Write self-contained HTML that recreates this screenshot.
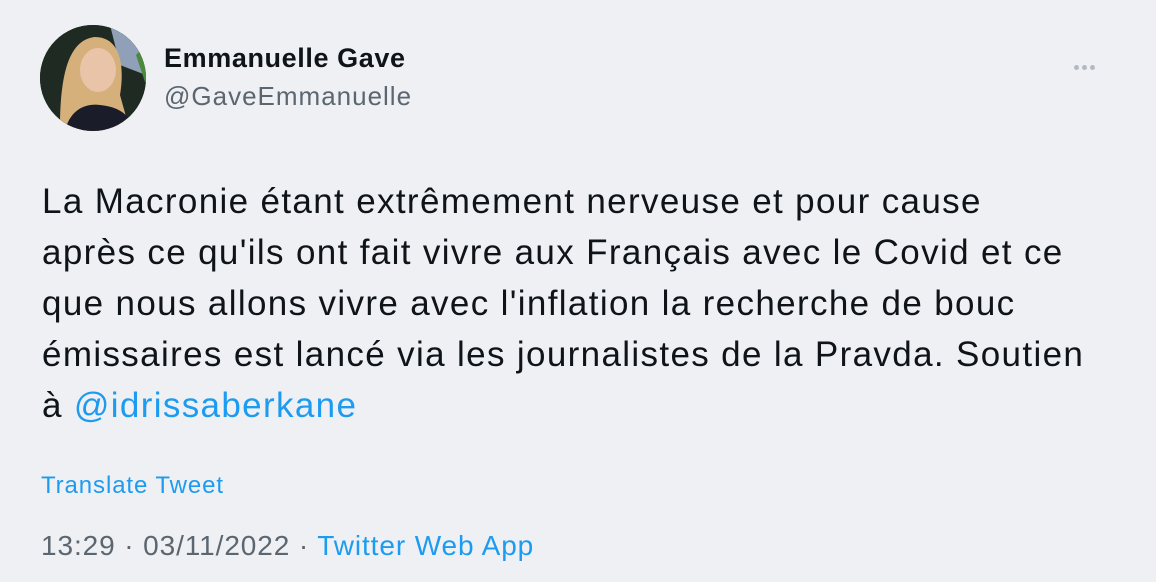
<!DOCTYPE html>
<html><head><meta charset="utf-8"><style>
html,body{margin:0;padding:0}
body{width:1156px;height:582px;background:#eef0f3;font-family:"Liberation Sans",Arial,sans-serif;position:relative;overflow:hidden;color:#0f1419}
.av{position:absolute;left:40px;top:25px;width:106px;height:106px;border-radius:50%;overflow:hidden;background:#1c1e22}
.name{position:absolute;left:164px;top:43px;font-size:27px;letter-spacing:0.6px;font-weight:bold;color:#0f1419}
.handle{position:absolute;left:164px;top:81px;font-size:26px;letter-spacing:1px;color:#5b6670}
.dots{position:absolute;left:1074px;top:57px}
.dots i{display:inline-block;width:5px;height:5px;border-radius:50%;background:#b3bac1;margin-right:3px}
.txt{position:absolute;left:42px;top:176px;font-size:35px;letter-spacing:1.35px;line-height:51px;white-space:nowrap;color:#0f1419}
a{color:#1d9bf0;text-decoration:none}
.tr{position:absolute;left:41px;top:472px;font-size:24px;letter-spacing:0.9px;color:#1d9bf0}
.ft{position:absolute;left:41px;top:530px;font-size:28px;letter-spacing:0.9px;color:#5b6670}
</style></head><body>
<div class="av"><svg width="106" height="106" viewBox="0 0 106 106">
<rect width="106" height="106" fill="#1f2a22"/>
<polygon points="70,0 106,0 106,50 80,40" fill="#8fa0b8"/>
<polygon points="96,30 106,20 106,60" fill="#4a8a3a"/>
<path d="M20,106 C20,60 25,15 55,12 C80,12 85,40 80,70 L90,106Z" fill="#d6b07a"/>
<ellipse cx="58" cy="45" rx="18" ry="22" fill="#e9c4a8"/>
<path d="M25,106 C30,85 45,78 60,80 C80,82 90,90 95,106Z" fill="#1a1c2a"/>
</svg></div>
<div class="name">Emmanuelle Gave</div>
<div class="handle">@GaveEmmanuelle</div>
<div class="dots"><i></i><i></i><i></i></div>
<div class="txt">La Macronie étant extrêmement nerveuse et pour cause<br>après ce qu'ils ont fait vivre aux Français avec le Covid et ce<br>que nous allons vivre avec l'inflation la recherche de bouc<br>émissaires est lancé via les journalistes de la Pravda. Soutien<br>à <a>@idrissaberkane</a></div>
<div class="tr">Translate Tweet</div>
<div class="ft">13:29 · 03/11/2022 · <a>Twitter Web App</a></div>
</body></html>
